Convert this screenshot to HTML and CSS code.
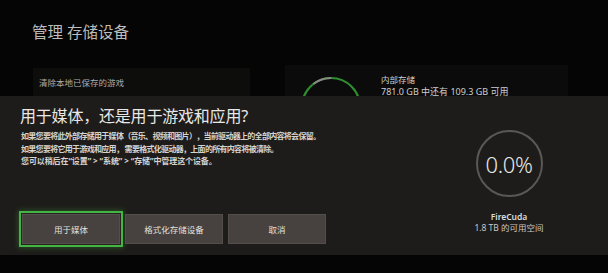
FILE: index.html
```html
<!DOCTYPE html>
<html lang="zh-CN">
<head>
<meta charset="utf-8">
<link rel="stylesheet" href="styles.css">
</head>
<body>
<div class="screen">
  <div class="top">
    <h1 class="page-title">管理&nbsp;存储设备</h1>
    <div class="top-row">
      <div class="row-left">清除本地已保存的游戏</div>
      <div class="row-right">
        <svg class="arc" width="62" height="22" viewBox="0 0 62 22">
          <circle cx="31" cy="31" r="29" fill="none" stroke="#2f8f2f" stroke-width="2"/>
          <path d="M13.4 8 A29 29 0 0 1 31 2" fill="none" stroke="#8a8a86" stroke-width="2"/>
        </svg>
        <div class="drive-info">
          <div class="drive-name">内部存储</div>
          <div class="drive-space">781.0 GB 中还有 109.3 GB 可用</div>
        </div>
      </div>
    </div>
  </div>
  <div class="dialog">
    <div class="dialog-main">
      <div class="dialog-title">用于媒体，还是用于游戏和应用?</div>
      <div class="dialog-body">
        <p>如果您要将此外部存储用于媒体（音乐、视频和图片），当前驱动器上的全部内容将会保留。</p>
        <p>如果您要将它用于游戏和应用， 需要格式化驱动器，上面的所有内容将被清除。</p>
        <p class="wide">您可以稍后在“设置” &gt; “系统” &gt; “存储”中管理这个设备。</p>
      </div>
      <div class="buttons">
        <div class="btn btn-focus">用于媒体</div>
        <div class="btn">格式化存储设备</div>
        <div class="btn">取消</div>
      </div>
    </div>
    <div class="dialog-side">
      <div class="ring">0.0%</div>
      <div class="ext-name">FireCuda</div>
      <div class="ext-space">1.8 TB 的可用空间</div>
    </div>
  </div>
</div>
</body>
</html>
```
FILE: styles.css
```css
* { box-sizing: border-box; margin: 0; padding: 0; }
html, body { width: 608px; height: 273px; overflow: hidden; background: #050505; }
body {
  font-family: "Noto Sans", "Noto Sans CJK SC", sans-serif;
  color: #d8d8d8;
}
.screen { width: 608px; height: 273px; display: flex; flex-direction: column; }
.top { height: 96px; display: flex; flex-direction: column; }
.page-title {
  font-size: 15.5px;
  font-weight: 400;
  color: #bdbdbd;
  line-height: 18px;
  margin: 23px 0 0 32px;
}
.top-row {
  display: flex;
  align-items: flex-end;
  margin-top: 6px;
  height: 49px;
}
.row-left {
  margin-left: 33px;
  width: 217px;
  height: 28px;
  background: #0d0d0c;
  font-size: 8.5px;
  color: #acacac;
  line-height: 28px;
  padding-left: 6px;
  padding-top: 1px;
}
.row-right {
  margin-left: 35px;
  width: 283px;
  height: 31px;
  background: #0b0b0b;
  display: flex;
  align-items: flex-start;
}
.arc { display: block; margin: 11px 0 0 15px; flex: none; }
.drive-info { margin-left: 19px; padding-top: 10px; }
.drive-name { font-size: 8.5px; line-height: 10.5px; color: #cfcfcf; }
.drive-space { font-size: 9px; line-height: 11px; color: #cfcfcf; }

.dialog {
  height: 159px;
  background: #1e1c1a;
  display: flex;
}
.dialog-main { flex: 1; padding: 10px 0 0 20px; }
.dialog-title {
  font-size: 16px;
  line-height: 20px;
  color: #e8e8e6;
  letter-spacing: -0.2px;
}
.dialog-body {
  margin-top: 4px;
  padding-left: 1px;
  font-size: 8px;
  line-height: 12.5px;
  font-weight: 700;
  color: #d6d4d0;
  letter-spacing: -0.7px;
  white-space: nowrap;
}
.dialog-body .wide { letter-spacing: -0.1px; }
.buttons {
  display: flex;
  gap: 5px;
  margin-top: 46.5px;
  padding-left: 2px;
}
.btn {
  width: 98px;
  height: 30px;
  background: #47413f;
  border: 1px solid #544e4b;
  color: #e2e0dc;
  font-size: 8.5px;
  display: flex;
  align-items: center;
  justify-content: center;
}
.btn-focus {
  box-shadow: 0 0 0 1px #262321, 0 0 0 3px #44b544, 0 0 5px 4px rgba(60, 170, 60, 0.35);
}
.dialog-side {
  width: 160px;
  margin-right: 19px;
  display: flex;
  flex-direction: column;
  align-items: center;
}
.ring {
  margin-top: 34px;
  width: 67px;
  height: 67px;
  border: 2px solid #5a5755;
  border-radius: 50%;
  display: flex;
  align-items: center;
  justify-content: center;
  font-size: 22px;
  font-weight: 300;
  color: #e8e8e6;
  letter-spacing: -0.3px;
}
.ext-name { margin-top: 15px; font-size: 8.5px; line-height: 10.5px; color: #dcdcdc; font-weight: 600; }
.ext-space { margin-top: 0.5px; font-size: 8.5px; line-height: 10.5px; color: #cdc6c4; }
```
